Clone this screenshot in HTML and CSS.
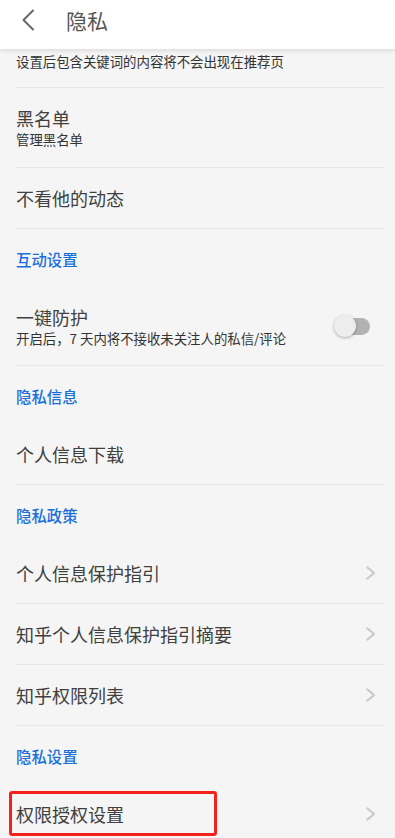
FILE: index.html
```html
<!DOCTYPE html>
<html lang="zh-CN">
<head>
<meta charset="utf-8">
<title>隐私</title>
<link rel="stylesheet" href="styles.css">
</head>
<body>
<header class="topbar">
  <svg class="back" width="14" height="22" viewBox="0 0 14 22"><polyline points="12,1.5 2.5,11 12,20.5" fill="none" stroke="#666" stroke-width="2" stroke-linecap="round" stroke-linejoin="round"/></svg>
  <h1 class="title">隐私</h1>
</header>
<main class="list">
  <div class="row row-partial">
    <div class="sub">设置后包含关键词的内容将不会出现在推荐页</div>
  </div>
  <div class="row row-tall">
    <div class="texts">
      <div class="main">黑名单</div>
      <div class="sub">管理黑名单</div>
    </div>
  </div>
  <div class="row"><div class="main">不看他的动态</div></div>

  <div class="section">互动设置</div>
  <div class="row row-tall row-toggle">
    <div class="texts">
      <div class="main">一键防护</div>
      <div class="sub">开启后，7 天内将不接收未关注人的私信/评论</div>
    </div>
    <div class="toggle"><span class="track"></span><span class="thumb"></span></div>
  </div>

  <div class="section">隐私信息</div>
  <div class="row"><div class="main">个人信息下载</div></div>

  <div class="section">隐私政策</div>
  <div class="row"><div class="main">个人信息保护指引</div><svg class="chev" width="10" height="14" viewBox="0 0 10 14"><polyline points="1.5,1.5 8,7 1.5,12.5" fill="none" stroke="#c9c9c9" stroke-width="2.2" stroke-linecap="round" stroke-linejoin="round"/></svg></div>
  <div class="row"><div class="main">知乎个人信息保护指引摘要</div><svg class="chev" width="10" height="14" viewBox="0 0 10 14"><polyline points="1.5,1.5 8,7 1.5,12.5" fill="none" stroke="#c9c9c9" stroke-width="2.2" stroke-linecap="round" stroke-linejoin="round"/></svg></div>
  <div class="row"><div class="main">知乎权限列表</div><svg class="chev" width="10" height="14" viewBox="0 0 10 14"><polyline points="1.5,1.5 8,7 1.5,12.5" fill="none" stroke="#c9c9c9" stroke-width="2.2" stroke-linecap="round" stroke-linejoin="round"/></svg></div>

  <div class="section">隐私设置</div>
  <div class="row row-last"><div class="main">权限授权设置</div><svg class="chev" width="10" height="14" viewBox="0 0 10 14"><polyline points="1.5,1.5 8,7 1.5,12.5" fill="none" stroke="#c9c9c9" stroke-width="2.2" stroke-linecap="round" stroke-linejoin="round"/></svg><span class="highlight"></span></div>
</main>
</body>
</html>
```
FILE: styles.css
```css
html, body {
  margin: 0;
  padding: 0;
  background: #f5f5f5;
  font-family: "Noto Sans CJK SC", "Noto Sans", sans-serif;
  overflow: hidden;
  height: 838px;
}

.topbar {
  position: relative;
  z-index: 2;
  height: 49px;
  background: #fff;
  box-shadow: 0 2px 4px rgba(0, 0, 0, 0.10);
  display: flex;
  align-items: flex-start;
  padding-top: 9px;
  box-sizing: border-box;
}

.back {
  margin-left: 21px;
  margin-top: 0;
}

.title {
  margin: 0 0 0 31px;
  font-size: 21px;
  font-weight: 400;
  color: #555;
  line-height: 22px;
}

.list {
  display: flex;
  flex-direction: column;
}

.row {
  position: relative;
  margin: 0 10px 0 15px;
  padding: 0 9px 0 1px;
  height: 60px;
  border-bottom: 1px solid #e6e6e6;
  display: flex;
  align-items: center;
  justify-content: space-between;
}

.row-partial {
  height: 38px;
  align-items: flex-start;
  padding-top: 2px;
  box-sizing: border-box;
  height: 39px;
}

.row-tall {
  height: 79px;
}

.row-toggle {
  height: 78px;
  padding-right: 13px;
}

.texts {
  display: flex;
  flex-direction: column;
}

.main {
  font-size: 18px;
  line-height: 24px;
  color: #404040;
}

.sub {
  font-size: 13.4px;
  line-height: 20px;
  color: #333;
}

.texts .sub {
  margin-top: -1px;
}

.section {
  height: 58px;
  box-sizing: border-box;
  padding: 19px 0 0 16px;
  font-size: 15.4px;
  line-height: 22px;
  font-weight: 500;
  color: #1a6fdc;
}

.toggle {
  position: relative;
  width: 38px;
  height: 24px;
}

.track {
  position: absolute;
  left: 3px;
  top: 4px;
  width: 33px;
  height: 17px;
  border-radius: 9px;
  background: #b2b2b2;
}

.thumb {
  position: absolute;
  left: 0;
  top: 1px;
  width: 22px;
  height: 22px;
  border-radius: 50%;
  background: #ededed;
  box-shadow: 0 1px 3px rgba(0, 0, 0, 0.3);
}

.chev {
  display: block;
}

.highlight {
  position: absolute;
  left: -6px;
  top: 7px;
  width: 208px;
  height: 45px;
  box-sizing: border-box;
  border: 3px solid #f5221b;
  border-radius: 3px;
}
```
